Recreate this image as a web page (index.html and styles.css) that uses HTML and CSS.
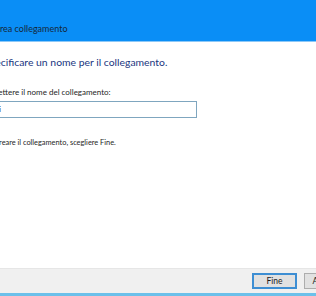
FILE: index.html
```html
<!DOCTYPE html>
<html lang="it">
<head>
<meta charset="utf-8">
<link rel="stylesheet" href="styles.css">
</head>
<body>
<div class="dialog">
  <div class="titlebar">
    <span class="title">Crea collegamento</span>
  </div>
  <div class="content">
    <h1 class="heading">Specificare un nome per il collegamento.</h1>
    <label class="label" for="name">Immettere il nome del collegamento:</label>
    <div class="input" id="name">Nuovi</div>
    <p class="note">Per creare il collegamento, scegliere Fine.</p>
  </div>
  <div class="footer">
    <button class="btn btn-default">Fine</button>
    <button class="btn">Annulla</button>
  </div>
</div>
</body>
</html>
```
FILE: styles.css
```css
* { box-sizing: border-box; }
html, body {
  margin: 0;
  padding: 0;
  width: 316px;
  height: 296px;
  overflow: hidden;
  background: #ffffff;
  font-family: Lato, "Noto Sans", sans-serif;
}
.dialog {
  width: 316px;
  height: 296px;
  display: flex;
  flex-direction: column;
}
.titlebar {
  height: 42px;
  background: #0a8ef6;
  border-bottom: 1px solid #8cc8f7;
  display: flex;
  align-items: flex-end;
  padding-bottom: 7px;
}
.title {
  margin-left: -6px;
  font-size: 9px;
  color: #16283a;
}
.content {
  flex: 1;
  margin-left: -16px;
  padding-top: 13px;
}
.heading {
  margin: 0;
  font-size: 10.4px;
  font-weight: normal;
  color: #1a3680;
  line-height: 14px;
}
.label {
  display: block;
  margin-top: 17px;
  margin-left: -1px;
  font-size: 8px;
  color: #1e1e1e;
  line-height: 12px;
}
.input {
  margin-top: 3px;
  width: 213px;
  height: 17px;
  border: 1px solid #7fa6bf;
  padding: 1px 4px 1px 0;
  text-indent: -5px;
  font-size: 8px;
  line-height: 13px;
  color: #1b1b1b;
}
.note {
  margin: 19px 0 0 -1px;
  font-size: 7.4px;
  color: #1e1e1e;
  line-height: 12px;
}
.footer {
  height: 28px;
  background: #f0f0f0;
  border-top: 1px solid #e6e6e6;
  border-bottom: 3px solid #6cc0ea;
  display: flex;
  align-items: center;
  justify-content: flex-end;
  gap: 7px;
  margin-right: -33px;
}
.btn {
  width: 45px;
  height: 16px;
  font-family: inherit;
  font-size: 8.5px;
  line-height: 12px;
  padding: 0;
  background: #e1e1e1;
  border: 1px solid #adadad;
  color: #1b1b1b;
}
.btn-default {
  border: 2px solid #3d8ed3;
}
```
